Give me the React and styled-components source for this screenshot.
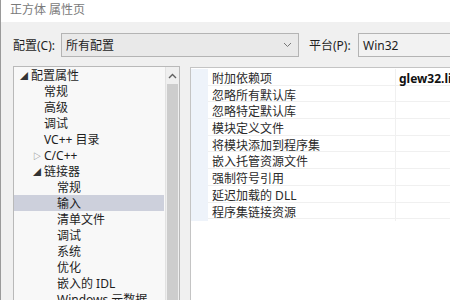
import React from "react";
import styled, { createGlobalStyle } from "styled-components";

const GlobalStyle = createGlobalStyle`
  html, body { margin: 0; padding: 0; }
  body {
    width: 450px;
    height: 300px;
    overflow: hidden;
    background: #f0f0f0;
    font-family: "Noto Sans", "Noto Sans CJK SC", sans-serif;
    font-size: 12px;
    color: #1e1e1e;
  }
`;

const Window = styled.div`
  width: 449px;
  height: 300px;
  border-left: 1px solid #9a9a9a;
  display: flex;
  flex-direction: column;
  overflow: hidden;
`;

const TitleBar = styled.div`
  height: 22px;
  flex: none;
  background: #fff;
  color: #7a7a7a;
  padding-left: 9px;
  display: flex;
  align-items: center;
  padding-bottom: 4px;
  box-sizing: border-box;
`;

const ConfigRow = styled.div`
  display: flex;
  align-items: center;
  padding: 11px 0 0 12px;
  height: 24px;
  flex: none;
`;

const Label = styled.div`
  width: ${({ width }) => width}px;
  flex: none;
`;

const Combo = styled.div`
  width: ${({ width }) => width}px;
  flex: none;
  height: 24px;
  box-sizing: border-box;
  border: 1px solid #b4b4b4;
  background: ${({ bg }) => bg || "#e9e9e9"};
  display: flex;
  align-items: center;
  padding-left: 4px;
  position: relative;
`;

const Chevron = styled.svg`
  position: absolute;
  right: 6px;
  top: 8px;
`;

const Body = styled.div`
  display: flex;
  margin-top: 9px;
  padding-left: 12px;
  gap: 10px;
  flex: 1;
  min-height: 0;
`;

const TreePanel = styled.div`
  width: 167px;
  flex: none;
  box-sizing: border-box;
  border: 1px solid #b9b9b9;
  border-bottom: none;
  background: #f8f8f8;
  display: flex;
  position: relative;
`;

const TreeList = styled.div`
  flex: 1;
  padding-top: 0px;
`;

const TreeRow = styled.div`
  height: 16px;
  display: flex;
  align-items: center;
  padding-left: ${({ level }) => 6 + level * 13}px;
  margin-right: 1px;
  background: ${({ selected }) => (selected ? "#cdd0dc" : "transparent")};
  white-space: nowrap;
`;

const Toggle = styled.span`
  width: 11px;
  flex: none;
  font-size: 8px;
  color: ${({ open }) => (open ? "#333" : "#666")};
  display: inline-flex;
  align-items: center;
`;

const ScrollBar = styled.div`
  width: 13px;
  flex: none;
  background: #efefef;
  border-left: 1px solid #e2e2e2;
  display: flex;
  flex-direction: column;
`;

const ScrollArrow = styled.div`
  height: 17px;
  display: flex;
  align-items: center;
  justify-content: center;
`;

const ScrollThumb = styled.div`
  flex: 1;
  margin: 0 1px;
  background: #cdcdcd;
`;

const PropPanel = styled.div`
  flex: 1;
  box-sizing: border-box;
  border: 1px solid #c4c4c4;
  border-right: none;
  border-bottom: none;
  background: #fff;
  margin-top: 1px;
  padding-top: 1px;
`;

const PropRow = styled.div`
  display: grid;
  grid-template-columns: 17px 188px 1fr;
  height: 16.7px;
  box-sizing: border-box;
  border-bottom: 1px solid #f0f0f0;
`;

const Gutter = styled.div`
  background: #eef3fa;
`;

const PropName = styled.div`
  display: flex;
  align-items: center;
  padding-left: 4px;
  color: #2a2a2a;
  border-right: 1px solid #f0f0f0;
  white-space: nowrap;
`;

const PropValue = styled.div`
  display: flex;
  align-items: center;
  padding-left: 3px;
  font-weight: ${({ bold }) => (bold ? 700 : 400)};
  white-space: nowrap;
  color: #111;
`;

const tree = [
  { text: "配置属性", level: 0, toggle: "open" },
  { text: "常规", level: 1 },
  { text: "高级", level: 1 },
  { text: "调试", level: 1 },
  { text: "VC++ 目录", level: 1 },
  { text: "C/C++", level: 1, toggle: "closed" },
  { text: "链接器", level: 1, toggle: "open" },
  { text: "常规", level: 2 },
  { text: "输入", level: 2, selected: true },
  { text: "清单文件", level: 2 },
  { text: "调试", level: 2 },
  { text: "系统", level: 2 },
  { text: "优化", level: 2 },
  { text: "嵌入的 IDL", level: 2 },
  { text: "Windows 元数据", level: 2 },
];

const props = [
  { name: "附加依赖项", value: "glew32.lib;glfw3.lib", bold: true },
  { name: "忽略所有默认库" },
  { name: "忽略特定默认库" },
  { name: "模块定义文件" },
  { name: "将模块添加到程序集" },
  { name: "嵌入托管资源文件" },
  { name: "强制符号引用" },
  { name: "延迟加载的 DLL" },
  { name: "程序集链接资源" },
];

export default function App() {
  return (
    <>
      <GlobalStyle />
      <Window>
        <TitleBar>正方体 属性页</TitleBar>
        <ConfigRow>
          <Label width={48}>配置(C):</Label>
          <Combo width={238}>
            所有配置
            <Chevron width="9" height="6" viewBox="0 0 9 6">
              <path d="M1 1 L4.5 4.5 L8 1" fill="none" stroke="#777" strokeWidth="1" />
            </Chevron>
          </Combo>
          <Label width={49} style={{ marginLeft: 10 }}>平台(P):</Label>
          <Combo width={120} bg="#f2f2f2">Win32</Combo>
        </ConfigRow>
        <Body>
          <TreePanel>
            <TreeList>
              {tree.map((item, i) => (
                <TreeRow key={i} level={item.level} selected={item.selected}>
                  {item.toggle ? (
                    <Toggle open={item.toggle === "open"}>
                      {item.toggle === "open" ? "◢" : "▷"}
                    </Toggle>
                  ) : (
                    <Toggle />
                  )}
                  {item.text}
                </TreeRow>
              ))}
            </TreeList>
            <ScrollBar>
              <ScrollArrow>
                <svg width="9" height="6" viewBox="0 0 9 6">
                  <path d="M1 5 L4.5 1.5 L8 5" fill="none" stroke="#606060" strokeWidth="1.4" />
                </svg>
              </ScrollArrow>
              <ScrollThumb />
            </ScrollBar>
          </TreePanel>
          <PropPanel>
            {props.map((p, i) => (
              <PropRow key={i}>
                <Gutter />
                <PropName>{p.name}</PropName>
                <PropValue bold={p.bold}>{p.value || ""}</PropValue>
              </PropRow>
            ))}
          </PropPanel>
        </Body>
      </Window>
    </>
  );
}
